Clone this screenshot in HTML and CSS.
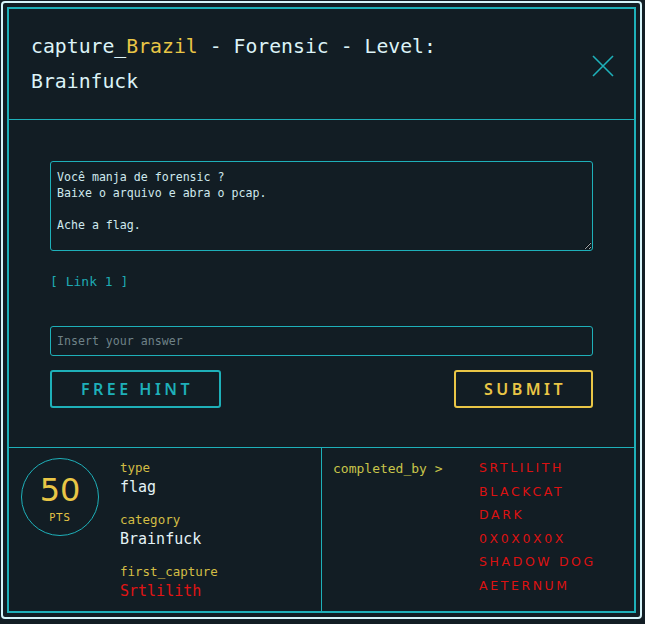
FILE: index.html
```html
<!DOCTYPE html>
<html>
<head>
<meta charset="utf-8">
<link rel="stylesheet" href="styles.css">
</head>
<body>
<div class="modal">
  <div class="inner">
    <header class="head">
      <h1 class="title">capture_<span class="hl">Brazil</span> - Forensic - Level: Brainfuck</h1>
      <button class="close" aria-label="close">
        <svg width="22" height="22" viewBox="0 0 22 22"><path d="M1 1L21 21M21 1L1 21" stroke="#1eb0b9" stroke-width="1.6" fill="none"/></svg>
      </button>
    </header>
    <section class="body">
      <textarea class="desc">Você manja de forensic ?
Baixe o arquivo e abra o pcap.

Ache a flag.</textarea>
      <a class="link">[ Link 1 ]</a>
      <input class="answer" type="text" placeholder="Insert your answer">
      <div class="actions">
        <button class="btn hint">FREE HINT</button>
        <button class="btn submit">SUBMIT</button>
      </div>
    </section>
    <footer class="foot">
      <div class="info">
        <div class="points">
          <span class="num">50</span>
          <span class="pts">PTS</span>
        </div>
        <dl class="meta">
          <dt>type</dt>
          <dd>flag</dd>
          <dt>category</dt>
          <dd>Brainfuck</dd>
          <dt>first_capture</dt>
          <dd class="red">Srtlilith</dd>
        </dl>
      </div>
      <div class="done">
        <div class="done-label">completed_by &gt;</div>
        <ul class="names">
          <li>SRTLILITH</li>
          <li>BLACKCAT</li>
          <li>DARK</li>
          <li>0X0X0X0X</li>
          <li>SHADOW DOG</li>
          <li>AETERNUM</li>
        </ul>
      </div>
    </footer>
  </div>
</div>
</body>
</html>
```

FILE: styles.css
```css
html, body {
  margin: 0;
  background: #121d24;
}
body {
  padding: 1px;
  font-family: "DejaVu Sans Mono", monospace;
}
.modal {
  width: 641px;
  height: 618px;
  box-sizing: border-box;
  border: 2px solid #d6f4f9;
  border-radius: 4px;
  padding: 4px;
}
.inner {
  height: 100%;
  box-sizing: border-box;
  border: 2px solid #1eb0b9;
  display: flex;
  flex-direction: column;
}
.head {
  flex: 0 0 111px;
  box-sizing: border-box;
  border-bottom: 1px solid #1eb0b9;
  display: flex;
  align-items: center;
  justify-content: space-between;
  padding: 0 20px 0 22px;
}
.title {
  margin: 0;
  font-weight: normal;
  font-size: 19.8px;
  line-height: 35px;
  color: #dcf3f7;
  width: 500px;
}
.hl { color: #e9c646; }
.close {
  background: none;
  border: 0;
  padding: 0;
  width: 22px;
  height: 22px;
  margin-top: 3px;
  display: block;
}
.close svg { display: block; }
.body {
  flex: 0 0 328px;
  padding: 41px 41px 0 41px;
  box-sizing: border-box;
  border-bottom: 1px solid #1eb0b9;
  display: flex;
  flex-direction: column;
}
.desc {
  display: block;
  height: 90px;
  box-sizing: border-box;
  margin: 0;
  resize: vertical;
  background: transparent;
  border: 1px solid #1eb0b9;
  border-radius: 3px;
  color: #cfe9ee;
  font-family: "DejaVu Sans Mono", monospace;
  font-size: 11.6px;
  line-height: 16px;
  padding: 7px 6px;
}
.link {
  display: block;
  margin-top: 23px;
  color: #1eaab3;
  font-size: 13px;
  line-height: 16px;
}
.answer {
  display: block;
  margin-top: 36px;
  height: 30px;
  box-sizing: border-box;
  background: transparent;
  border: 1px solid #1eb0b9;
  border-radius: 3px;
  padding: 0 6px;
  color: #cfe9ee;
  font-family: "DejaVu Sans Mono", monospace;
  font-size: 11.6px;
}
.answer::placeholder { color: #6f8288; }
.actions {
  margin-top: 14px;
  display: flex;
  justify-content: space-between;
}
.btn {
  height: 38px;
  box-sizing: border-box;
  background: transparent;
  border: 2px solid #1eb0b9;
  border-radius: 3px;
  font-family: "Noto Sans", sans-serif;
  font-weight: 600;
  font-size: 16px;
  letter-spacing: 3.5px;
  padding: 0 0 0 3px;
}
.hint { width: 171px; color: #1eb0b9; }
.submit { width: 139px; color: #e9c646; border-color: #e9c646; }
.foot {
  flex: 1 1 auto;
  min-height: 0;
  display: flex;
}
.info {
  width: 313px;
  border-right: 1px solid #1eb0b9;
  display: flex;
  padding: 10px 0 0 12px;
  box-sizing: border-box;
}
.points {
  width: 78px;
  height: 78px;
  border: 1px solid #1eb0b9;
  border-radius: 50%;
  box-sizing: border-box;
  display: flex;
  flex-direction: column;
  align-items: center;
  justify-content: center;
  color: #e9c646;
  font-family: "DejaVu Sans", sans-serif;
}
.num { font-size: 32px; line-height: 34px; margin-top: 4px; }
.pts { font-size: 10px; line-height: 14px; letter-spacing: 1px; margin-top: 4px; }
.meta {
  margin: 2px 0 0 21px;
}
.meta dt {
  color: #d2bd44;
  font-size: 12.5px;
  line-height: 16px;
}
.meta dd {
  margin: 1px 0 15px 0;
  color: #e4f3f6;
  font-size: 15px;
  line-height: 20px;
}
.meta dd.red { color: #e01414; margin-bottom: 0; }
.done {
  flex: 1;
  display: flex;
  padding: 12px 0 0 11px;
}
.done-label {
  width: 146px;
  color: #c9c54a;
  font-size: 13px;
  line-height: 16px;
  margin-top: 1px;
}
.names {
  list-style: none;
  margin: 0;
  padding: 0;
  font-family: "DejaVu Sans", sans-serif;
  font-size: 12.5px;
  letter-spacing: 2.6px;
  color: #dc1212;
}
.names li {
  line-height: 16px;
  margin-bottom: 7.6px;
}
.names li:last-child { margin-bottom: 0; }
```
